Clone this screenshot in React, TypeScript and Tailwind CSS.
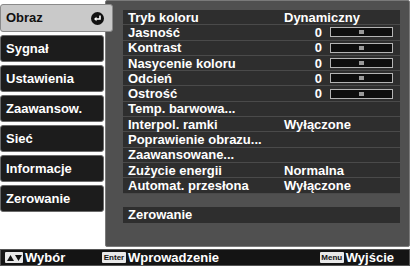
import React from 'react'

// Projector OSD: "Obraz" (Image) menu

const tabs = ['Obraz', 'Sygnał', 'Ustawienia', 'Zaawansow.', 'Sieć', 'Informacje', 'Zerowanie']

type Row = { label: string; value?: string; slider?: boolean }

const rows: Row[] = [
    { label: 'Tryb koloru', value: 'Dynamiczny' },
    { label: 'Jasność', slider: true },
    { label: 'Kontrast', slider: true },
    { label: 'Nasycenie koloru', slider: true },
    { label: 'Odcień', slider: true },
    { label: 'Ostrość', slider: true },
    { label: 'Temp. barwowa...' },
    { label: 'Interpol. ramki', value: 'Wyłączone' },
    { label: 'Poprawienie obrazu...' },
    { label: 'Zaawansowane...' },
    { label: 'Zużycie energii', value: 'Normalna' },
    { label: 'Automat. przesłona', value: 'Wyłączone' },
]

function EnterIcon() {
    return (
        <svg width="13" height="13" viewBox="0 0 13 13">
            <circle cx="6.5" cy="6.5" r="6.5" fill="#111" />
            <path d="M9 3.5 V7 H4.5" stroke="#fff" strokeWidth="1.6" fill="none" />
            <path d="M3 7 L5.5 4.8 V9.2 Z" fill="#fff" />
        </svg>
    )
}

function Slider() {
    return (
        <div className="flex items-center">
            <span className="w-[12px] text-right">0</span>
            <div className="ml-[8px] w-[63px] h-[10px] bg-[#0e0e0e] border border-[#b4b4b4] flex items-center justify-center">
                <div className="w-[5px] h-[4px] bg-[#9a9a9a]" />
            </div>
        </div>
    )
}

function Key({ children }: { children: React.ReactNode }) {
    return (
        <span className="inline-flex items-center justify-center w-[24px] h-[11px] bg-[#e8e8e8] text-[#111] text-[8px] leading-none rounded-[1px] mr-[2px] font-bold">
            {children}
        </span>
    )
}

export default function App() {
    return (
        <div
            className="w-[412px] h-[268px] bg-white text-white font-bold text-[13px] overflow-hidden"
            style={{ fontFamily: '"Liberation Sans", Arial, sans-serif' }}
        >
            <div className="flex h-[249px]">
                {/* Left: tabs */}
                <div className="w-[105px] flex flex-col pt-[4px] gap-[3px]">
                    {tabs.map((t, i) =>
                        i === 0 ? (
                            <div
                                key={t}
                                className="relative z-10 w-[113px] h-[28px] rounded-[3px] bg-[#c9c9c9] border border-[#8a8a8a] text-[#111] flex items-center justify-between pl-[5px] pr-[8px]"
                            >
                                <span>{t}</span>
                                <EnterIcon />
                            </div>
                        ) : (
                            <div
                                key={t}
                                className="w-[104px] h-[27px] rounded-[3px] bg-[#1c1c1c] border border-[#6a6a6a] flex items-center pl-[5px]"
                            >
                                {t}
                            </div>
                        )
                    )}
                </div>

                {/* Right: settings panel */}
                <div className="w-[305px] h-[247px] bg-[#505050] border border-[#7a7a7a] rounded-[2px] pt-[9px] pl-[17px] pr-[9px]">
                    <div className="bg-[#2e2e2e]">
                        {rows.map((r) => (
                            <div
                                key={r.label}
                                className="h-[15.3px] flex items-center border-b border-[#4a4a4a] pl-[5px] leading-none"
                            >
                                <span className="w-[156px]">{r.label}</span>
                                {r.value && <span>{r.value}</span>}
                                {r.slider && (
                                    <div className="ml-[26px]">
                                        <Slider />
                                    </div>
                                )}
                            </div>
                        ))}
                    </div>
                    <div className="mt-[13px] h-[16px] bg-[#2e2e2e] flex items-center pl-[5px] leading-none">
                        Zerowanie
                    </div>
                </div>
            </div>

            {/* Bottom help bar */}
            <div className="w-[410px] h-[17px] bg-[#141414] border border-[#555] flex items-center leading-none">
                <div className="w-[101px] flex items-center pl-[4px]">
                    <span className="inline-flex items-center justify-center w-[18px] h-[11px] bg-[#e8e8e8] rounded-[1px] mr-[2px] gap-[1px]">
                        <svg width="7" height="6" viewBox="0 0 7 6"><path d="M0 6 L3.5 0 L7 6 Z" fill="#111" /></svg>
                        <svg width="7" height="6" viewBox="0 0 7 6"><path d="M0 0 L3.5 6 L7 0 Z" fill="#111" /></svg>
                    </span>
                    Wybór
                </div>
                <div className="flex items-center">
                    <Key>Enter</Key>
                    Wprowadzenie
                </div>
                <div className="ml-auto flex items-center pr-[15px]">
                    <Key>Menu</Key>
                    Wyjście
                </div>
            </div>
        </div>
    )
}
